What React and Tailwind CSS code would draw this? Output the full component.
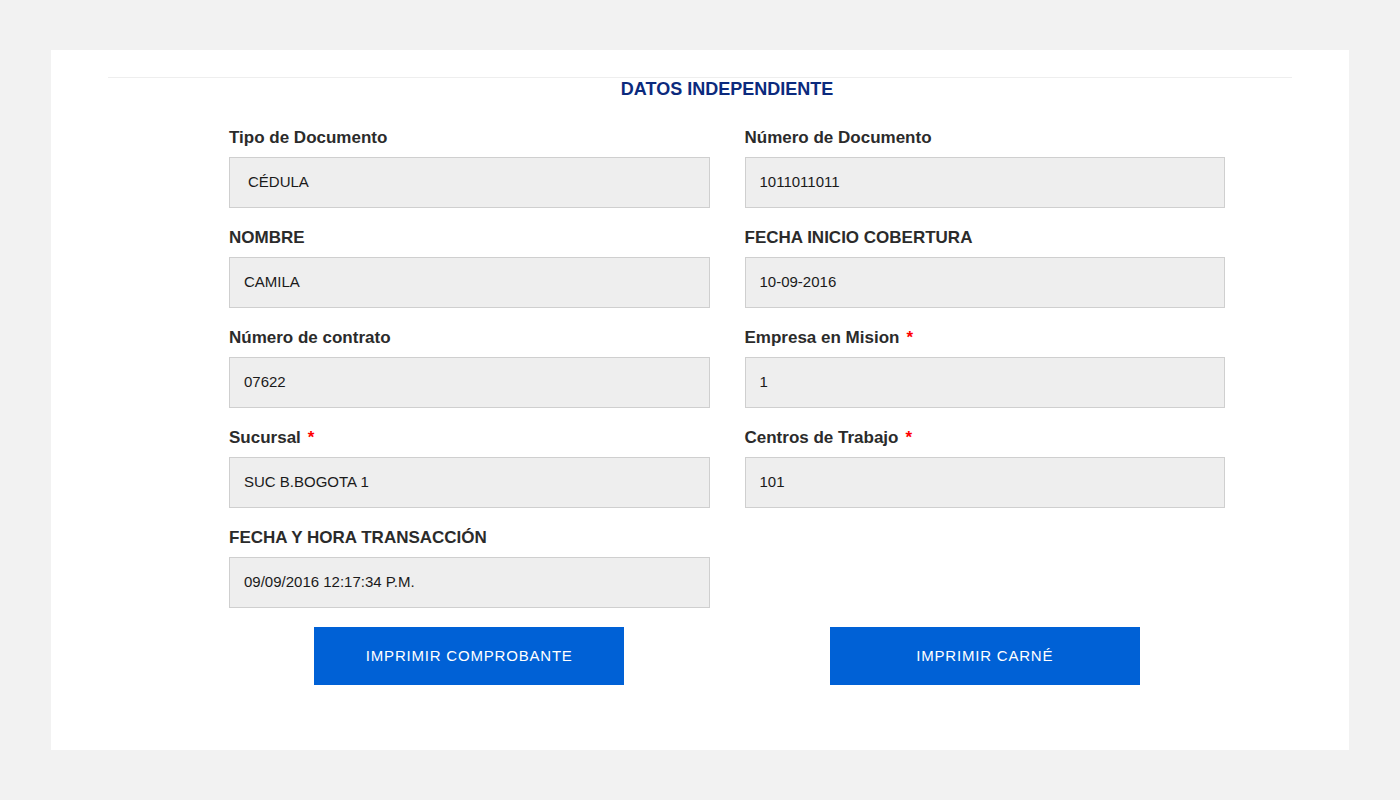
import React from "react";

const font = { fontFamily: '"Liberation Sans Narrow", "Liberation Sans", Arial, sans-serif' };

function Field({ label, value, required, select }) {
  return (
    <div className="flex flex-col">
      <div className="h-[40px] flex items-center text-[17px] font-bold text-[#2b2b2b] leading-none pt-[1px]">
        {label}
        {required && <span className="text-[#ff0000] ml-[7px]">*</span>}
      </div>
      <div
        className={`h-[51px] bg-[#eeeeee] border border-[#cfcfcf] flex items-center text-[15px] text-[#1a1a1a] ${select ? "pl-[18px]" : "pl-[14px]"}`}
      >
        {value}
      </div>
    </div>
  );
}

export default function App() {
  return (
    <div className="min-h-[800px] w-full bg-[#f2f2f2] pt-[50px] pb-[50px]" style={font}>
      <div className="mx-[51px] h-[700px] bg-white pt-[27px]">
        <div className="mx-[57px] border-t border-[#eeeeee]" />
        <div className="ml-[178px] w-[996px] text-center text-[18px] font-bold text-[#0b2a7d] leading-none pt-[2px]">
          DATOS INDEPENDIENTE
        </div>
        <div className="ml-[178px] w-[996px] mt-[19px] grid grid-cols-2 gap-x-[35px] gap-y-[9px]">
          <Field label="Tipo de Documento" value="CÉDULA" select />
          <Field label="Número de Documento" value="1011011011" />
          <Field label="NOMBRE" value="CAMILA" />
          <Field label="FECHA INICIO COBERTURA" value="10-09-2016" />
          <Field label="Número de contrato" value="07622" />
          <Field label="Empresa en Mision" value="1" required />
          <Field label="Sucursal" value="SUC B.BOGOTA 1" required />
          <Field label="Centros de Trabajo" value="101" required />
          <Field label="FECHA Y HORA TRANSACCIÓN" value="09/09/2016 12:17:34 P.M." />
          <div />
        </div>
        <div className="ml-[178px] w-[996px] mt-[19px] grid grid-cols-2 gap-x-[35px]">
          <div className="flex justify-center">
            <button className="w-[310px] h-[58px] bg-[#0061d6] text-white text-[15px] tracking-[0.8px]">
              IMPRIMIR COMPROBANTE
            </button>
          </div>
          <div className="flex justify-center">
            <button className="w-[310px] h-[58px] bg-[#0061d6] text-white text-[15px] tracking-[0.8px]">
              IMPRIMIR CARNÉ
            </button>
          </div>
        </div>
      </div>
    </div>
  );
}
